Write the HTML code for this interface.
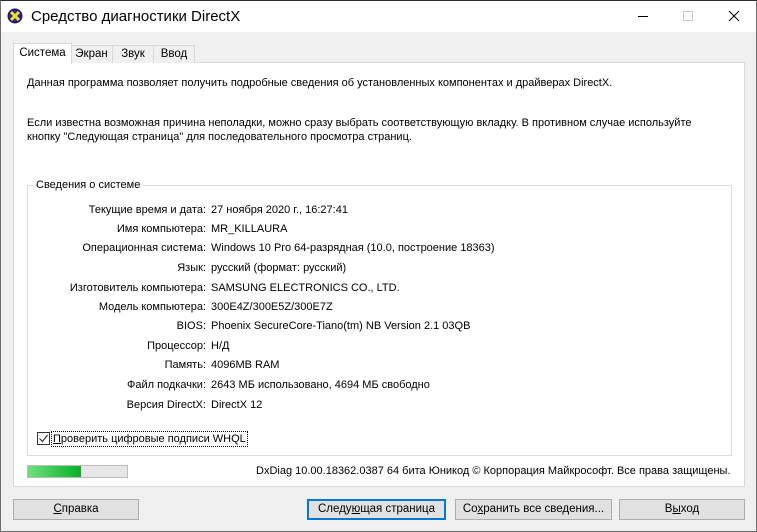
<!DOCTYPE html>
<html><head><meta charset="utf-8"><style>
*{box-sizing:border-box;margin:0;padding:0}
body{width:757px;height:532px;background:#f0f0f0;font-family:"Liberation Sans",sans-serif;font-size:11px;color:#000;position:relative;overflow:hidden}
.a{position:absolute;white-space:nowrap}
#win{position:absolute;left:0;top:0;width:757px;height:532px;border:1px solid #6e6e6e;border-top:1px solid #2b2b2b}
#title{position:absolute;left:0;top:0;width:757px;height:32px;background:#fff}
.tab{position:absolute;top:45px;height:18px;border:1px solid #d9d9d9;border-bottom:none;background:#f0f0f0;padding:2px 0 0;text-align:center;font-size:11.5px}
#panel{position:absolute;left:13px;top:62px;width:732px;height:425px;background:#fff;border:1px solid #d9d9d9}
#grp{position:absolute;left:27px;top:185px;width:705px;height:271px;border:1px solid #dcdcdc}
.l{position:absolute;right:551px;text-align:right;white-space:nowrap}
.v{position:absolute;left:211px;white-space:nowrap}
.btn{position:absolute;top:499px;height:21px;background:#e1e1e1;border:1px solid #adadad;text-align:center;line-height:19px;font-size:11.5px}
</style></head><body>
<div id="title"></div>
<div id="win"></div>
<svg class="a" style="left:7px;top:8px" width="16" height="16" viewBox="0 0 16 16"><circle cx="8" cy="8" r="7.5" fill="#1c1c5c"/><circle cx="8" cy="8" r="6" fill="#2a2a8a"/><path d="M4 4L12 12M12 4L4 12" stroke="#f2e030" stroke-width="3"/></svg>
<div class="a" style="left:31px;top:8px;font-size:15px">Средство диагностики DirectX</div>
<div class="a" style="left:638px;top:16px;width:10px;height:1px;background:#000"></div>
<div class="a" style="left:683px;top:11px;width:10px;height:10px;border:1px solid #c8c8c8"></div>
<svg class="a" style="left:728px;top:10px" width="12" height="12"><path d="M1 1L11 11M11 1L1 11" stroke="#000" stroke-width="1"/></svg>
<div id="panel"></div>
<div class="tab" style="left:70px;width:43px">Экран</div>
<div class="tab" style="left:112px;width:42px">Звук</div>
<div class="tab" style="left:153px;width:42px">Ввод</div>
<div class="tab" style="left:13px;top:43px;height:21px;width:59px;background:#fff;padding-top:3px">Система</div>
<div class="a" style="left:27px;top:77px">Данная программа позволяет получить подробные сведения об установленных компонентах и драйверах DirectX.</div>
<div class="a" style="left:27px;top:117px">Если известна возможная причина неполадки, можно сразу выбрать соответствующую вкладку. В противном случае используйте</div>
<div class="a" style="left:27px;top:131px">кнопку "Следующая страница" для последовательного просмотра страниц.</div>
<div id="grp"></div>
<div class="a" style="left:33px;top:179px;background:#fff;padding:0 3px">Сведения о системе</div>
<div class="l" style="top:204px">Текущие время и дата:</div><div class="v" style="top:204px">27 ноября 2020 г., 16:27:41</div>
<div class="l" style="top:223px">Имя компьютера:</div><div class="v" style="top:223px">MR_KILLAURA</div>
<div class="l" style="top:242px">Операционная система:</div><div class="v" style="top:242px">Windows 10 Pro 64-разрядная (10.0, построение 18363)</div>
<div class="l" style="top:262px">Язык:</div><div class="v" style="top:262px">русский (формат: русский)</div>
<div class="l" style="top:282px">Изготовитель компьютера:</div><div class="v" style="top:282px">SAMSUNG ELECTRONICS CO., LTD.</div>
<div class="l" style="top:301px">Модель компьютера:</div><div class="v" style="top:301px">300E4Z/300E5Z/300E7Z</div>
<div class="l" style="top:320px">BIOS:</div><div class="v" style="top:320px">Phoenix SecureCore-Tiano(tm) NB Version 2.1 03QB</div>
<div class="l" style="top:340px">Процессор:</div><div class="v" style="top:340px">Н/Д</div>
<div class="l" style="top:359px">Память:</div><div class="v" style="top:359px">4096MB RAM</div>
<div class="l" style="top:379px">Файл подкачки:</div><div class="v" style="top:379px">2643 МБ использовано, 4694 МБ свободно</div>
<div class="l" style="top:399px">Версия DirectX:</div><div class="v" style="top:399px">DirectX 12</div>
<div class="a" style="left:37px;top:432px;width:13px;height:13px;border:1px solid #333;background:#fff"></div>
<svg class="a" style="left:38px;top:433px" width="11" height="11"><path d="M1.5 5.5L4.5 8.5L9.5 2" stroke="#333" stroke-width="1.2" fill="none"/></svg>
<div class="a" style="left:51px;top:431px;border:1px dotted #000;padding:0 1px;line-height:14px"><u>П</u>роверить цифровые подписи WHQL</div>
<div class="a" style="left:27px;top:465px;width:101px;height:13px;background:#e6e6e6;border:1px solid #bcbcbc"></div>
<div class="a" style="left:28px;top:466px;width:53px;height:11px;background:linear-gradient(90deg,#6fe07f,#06b025)"></div>
<div class="a" style="left:256px;top:465px">DxDiag 10.00.18362.0387 64 бита Юникод © Корпорация Майкрософт. Все права защищены.</div>
<div class="btn" style="left:13px;width:126px"><u>С</u>правка</div>
<div class="btn" style="left:307px;width:139px;border:2px solid #0078d7;line-height:17px">Следу<u>ю</u>щая страница</div>
<div class="btn" style="left:455px;width:157px">Со<u>х</u>ранить все сведения...</div>
<div class="btn" style="left:619px;width:126px">В<u>ы</u>ход</div>
</body></html>
